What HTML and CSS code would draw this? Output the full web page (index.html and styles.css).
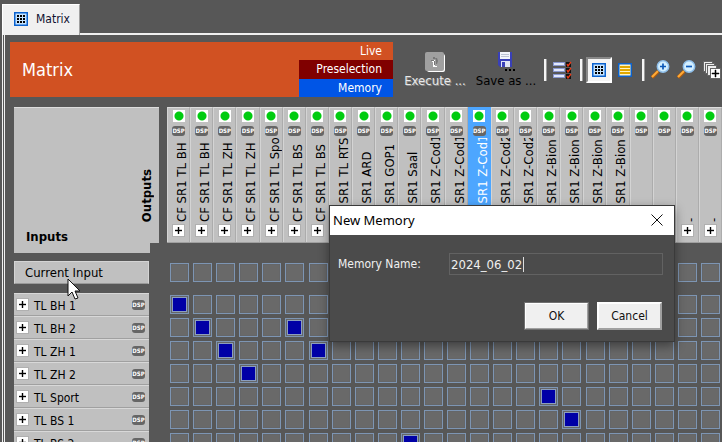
FILE: index.html
```html
<!DOCTYPE html>
<html lang="en">
<head>
  <meta charset="utf-8">
  <title>Matrix</title>
  <link rel="stylesheet" href="styles.css">
</head>
<body>
  <nav class="tabs">
    <a class="tab" href="#matrix">
      <svg class="tab-icon" width="14" height="14" viewBox="0 0 14 14">
        <rect x="0.75" y="0.75" width="12.5" height="12.5" fill="#c4e3ff" stroke="#0b62cf" stroke-width="1.5"/>
        <path d="M3 3h2v2H3zM6 3h2v2H6zM9 3h2v2H9zM3 6h2v2H3zM6 6h2v2H6zM9 6h2v2H9zM3 9h2v2H3zM6 9h2v2H6zM9 9h2v2H9z" fill="#000"/>
      </svg>
      Matrix
    </a>
  </nav>

  <main class="pane" id="matrix">
    <header class="top">
      <div class="banner">
        <h1>Matrix</h1>
        <div class="modes">
          <span class="mode">Live</span>
          <span class="mode preselection">Preselection</span>
          <span class="mode memory">Memory</span>
        </div>
      </div>

      <div class="toolbar">
        <button class="tool execute" disabled>
          <svg width="20" height="20" viewBox="0 0 20 20">
            <rect x="2" y="2" width="18" height="18" rx="2" fill="#fff"/>
            <rect x="0" y="0" width="19" height="19" rx="2" fill="#a0a0a0"/>
            <path d="M7 8h3v6h2v1H8v-5H7z" fill="#fff"/>
            <path d="M8 5h2v2H8zM10 6h2l1 3-1 3h-1V8zM6 8h3v1H6zM9 9h1v4H9z" fill="#777"/>
          </svg>
          Execute ...
        </button>
        <button class="tool save">
          <svg width="18" height="20" viewBox="0 0 18 20">
            <path d="M1 0h14v15H3l-2-2z" fill="#3940b8"/>
            <path d="M3 0h10v7H3z" fill="#f1f4fa"/>
            <path d="M4 2h8v1H4zM4 4h8v1H4z" fill="#bcc3d3"/>
            <path d="M4 9h9v6H4z" fill="#dfe5f4"/>
            <path d="M5 10h3v5H5z" fill="#3940b8"/>
            <path d="M8 17h2v2H8zM12 17h2v2h-2zM16 17h2v2h-2z" fill="#000"/>
          </svg>
          Save as ...
        </button>
        <span class="separator"></span>
        <button class="icon-btn list-btn" aria-label="List">
          <svg width="19" height="18" viewBox="0 0 19 18">
            <path d="M0 1h12v4H0zM0 7h12v4H0zM0 13h12v4H0z" fill="#8997cf"/>
            <path d="M1 2h10v2H1zM1 8h10v2H1zM1 14h10v2H1z" fill="#e1e8fb"/>
            <path d="M13 1h5v5h-5zM13 7h5v5h-5zM13 13h5v5h-5z" fill="#111"/>
            <path d="M14 3l1 2 3-4M14 9l1 2 3-4M14 15l1 2 3-4" fill="none" stroke="#ee3a17" stroke-width="1.3"/>
          </svg>
        </button>
        <span class="separator"></span>
        <button class="icon-btn pressed" aria-label="Matrix view">
          <svg width="14" height="14" viewBox="0 0 14 14">
            <rect x="0.75" y="0.75" width="12.5" height="12.5" fill="#c4e3ff" stroke="#0b62cf" stroke-width="1.5"/>
            <path d="M3 3h2v2H3zM6 3h2v2H6zM9 3h2v2H9zM3 6h2v2H3zM6 6h2v2H6zM9 6h2v2H9zM3 9h2v2H3zM6 9h2v2H6zM9 9h2v2H9z" fill="#000"/>
          </svg>
        </button>
        <button class="icon-btn rows-btn" aria-label="Row view">
          <svg width="14" height="14" viewBox="0 0 14 14">
            <rect x="0.75" y="0.75" width="12.5" height="12.5" fill="#fff4c2" stroke="#0b62cf" stroke-width="1.5"/>
            <path d="M2 3h10v2H2zM2 6h10v2H2zM2 9h10v2H2z" fill="#e0a800"/>
          </svg>
        </button>
        <span class="separator"></span>
        <button class="icon-btn zoom-btn" aria-label="Zoom in">
          <svg width="19" height="19" viewBox="0 0 19 19">
            <path d="M1 17.5l6-6" stroke="#b35c0a" stroke-width="3.5"/>
            <path d="M1 17l6-6" stroke="#ffab38" stroke-width="2"/>
            <circle cx="12" cy="6.5" r="5.7" fill="#d3efff" stroke="#8fbfea" stroke-width="1.5"/>
            <path d="M12 3.5v6M9 6.5h6" stroke="#0c58b8" stroke-width="1.7"/>
          </svg>
        </button>
        <button class="icon-btn zoom-btn" aria-label="Zoom out">
          <svg width="19" height="19" viewBox="0 0 19 19">
            <path d="M1 17.5l6-6" stroke="#b35c0a" stroke-width="3.5"/>
            <path d="M1 17l6-6" stroke="#ffab38" stroke-width="2"/>
            <circle cx="12" cy="6.5" r="5.7" fill="#d3efff" stroke="#8fbfea" stroke-width="1.5"/>
            <path d="M9 6.5h6" stroke="#0c58b8" stroke-width="1.7"/>
          </svg>
        </button>
        <button class="icon-btn" aria-label="Expand all">
          <svg width="18" height="18" viewBox="0 0 18 18">
            <g fill="#eee" stroke="#666">
              <rect x="0.5" y="0.5" width="9" height="10"/>
              <rect x="2.5" y="2.5" width="9" height="10"/>
              <rect x="4.5" y="4.5" width="9" height="10"/>
              <rect x="7.5" y="7.5" width="10" height="10" fill="#fff"/>
            </g>
            <path d="M12 9h1v3h3v1h-3v3h-1v-3H9v-1h3z" fill="#000" stroke="#000" stroke-width="0.5"/>
          </svg>
        </button>
      </div>
    </header>

    <section class="outputs">
      <div class="corner">
        <span class="outputs-title">Outputs</span>
        <span class="inputs-title">Inputs</span>
      </div>
      <div class="columns" id="columns"></div>
    </section>

    <section class="current">
      <div class="current-label">
        Current Input
        <svg class="cursor" width="14" height="23" viewBox="0 0 14 23">
          <path d="M1 1v17l4-4 3 7 3-1-3-7h5z" fill="#fff" stroke="#111"/>
        </svg>
      </div>
      <div class="cells" id="currentCells"></div>
    </section>

    <section class="inputs">
      <ul class="input-list" id="inputList"></ul>
      <div class="cells" id="cells"></div>
    </section>
  </main>

  <form class="dialog" role="dialog" aria-labelledby="dialogTitle">
    <div class="dialog-title">
      <span id="dialogTitle">New Memory</span>
      <button type="button" class="close" aria-label="Close">
        <svg width="12" height="12" viewBox="0 0 12 12">
          <path d="M0.5 0.5l11 11M11.5 0.5l-11 11" stroke="#111" fill="none"/>
        </svg>
      </button>
    </div>
    <div class="field">
      <label for="memoryName">Memory Name:</label>
      <div class="text-box">
        <input id="memoryName" type="text" value="2024_06_02">
        <span class="caret"></span>
      </div>
    </div>
    <div class="actions">
      <button type="button" class="action ok">OK</button>
      <button type="button" class="action">Cancel</button>
    </div>
  </form>

  <script>
    const outputs = [
      'CF SR1 TL BH', 'CF SR1 TL BH', 'CF SR1 TL ZH', 'CF SR1 TL ZH',
      'CF SR1 TL Spo', 'CF SR1 TL BS', 'CF SR1 TL BS', 'CF SR1 TL RTS',
      'CF SR1 ARD', 'CF SR1 GOP1', 'CF SR1 Saal', 'CF SR1 Z-Cod1',
      'CF SR1 Z-Cod1', 'CF SR1 Z-Cod1', 'CF SR1 Z-Cod2', 'CF SR1 Z-Cod2',
      'CF SR1 Z-Bion', 'CF SR1 Z-Bion', 'CF SR1 Z-Bion', 'CF SR1 Z-Bion',
      '-', '-', '-', '-'
    ];
    const selectedOutput = 13;

    // connected outputs for each input
    const inputs = [
      { name: 'TL BH 1', on: [0] },
      { name: 'TL BH 2', on: [1, 5] },
      { name: 'TL ZH 1', on: [2, 6] },
      { name: 'TL ZH 2', on: [3] },
      { name: 'TL Sport', on: [16] },
      { name: 'TL BS 1', on: [17] },
      { name: 'TL BS 2', on: [10] }
    ];

    const plus = `<button class="plus" aria-label="Expand">
      <svg width="7" height="7" viewBox="0 0 7 7"><path d="M3 0h1v3h3v1H4v3H3V4H0V3h3z" stroke="#000" stroke-width="0.4"/></svg>
    </button>`;

    const dsp = '<span class="dsp">DSP</span>';

    function cell(on) {
      return `<span class="cell">${on ? '<span class="point"></span>' : ''}</span>`;
    }

    document.getElementById('columns').innerHTML = outputs.map((name, i) => `
      <div class="column ${i === selectedOutput ? 'selected' : ''}">
        <span class="led"></span>
        ${dsp}
        <span class="column-name">${name}</span>
        ${plus}
      </div>`).join('');

    document.getElementById('currentCells').innerHTML = outputs.map(() => cell(false)).join('');

    document.getElementById('inputList').innerHTML = inputs.map(input => `
      <li class="input-row">${plus}<span class="input-name">${input.name}</span>${dsp}</li>`).join('');

    document.getElementById('cells').innerHTML = inputs.map(input =>
      outputs.map((name, i) => cell(input.on.includes(i))).join('')
    ).join('');
  </script>
</body>
</html>
```
FILE: styles.css
```css
* {
  box-sizing: border-box;
}

body {
  margin: 0;
  padding: 4px 0 0 2px;
  height: 100vh;
  overflow: hidden;
  background: #575757;
  color: #000;
  font-family: "DejaVu Sans Condensed", "DejaVu Sans", sans-serif;
  font-size: 12px;
}

button {
  font: inherit;
  color: inherit;
  padding: 0;
  border: none;
  background: none;
}

svg {
  display: block;
}

/* tabs */
.tabs {
  display: flex;
}

.tab {
  display: flex;
  align-items: center;
  gap: 8px;
  height: 31px;
  margin-bottom: -2px;
  padding: 0 9px 2px 11px;
  background: #f0f0f0;
  border-top: 1px solid #fff;
  border-left: 1px solid #fff;
  border-right: 1px solid #a0a0a0;
  color: #101030;
  text-decoration: none;
  z-index: 1;
}

.pane {
  border-top: 2px solid #f0f0f0;
  border-left: 3px double #f0f0f0;
}

/* banner and toolbar */
.top {
  display: flex;
  padding: 7px 0 10px 5px;
}

.banner {
  flex: 1;
  display: flex;
  justify-content: space-between;
  height: 55px;
  background: #d15122;
  color: #fff;
}

.banner h1 {
  margin: 0;
  padding-left: 12px;
  font-size: 18px;
  font-weight: normal;
  line-height: 55px;
}

.modes {
  display: grid;
  grid-template-rows: repeat(3, 1fr);
  width: 94px;
}

.mode {
  display: flex;
  align-items: center;
  justify-content: flex-end;
  padding-right: 11px;
}

.preselection {
  background: #800000;
}

.memory {
  background: #0055e6;
}

.toolbar {
  display: flex;
  align-items: center;
  width: 329px;
  overflow: hidden;
}

.tool {
  display: flex;
  flex-direction: column;
  align-items: center;
  justify-content: space-between;
  flex: none;
  height: 36px;
  white-space: nowrap;
  font-size: 13px;
}

.execute {
  width: 64px;
  margin-left: 10px;
  color: #e8e8e8;
  text-shadow: 1px 1px 0 #8a8a8a;
}

.save {
  width: 64px;
  margin-left: 7px;
}

.separator {
  flex: none;
  width: 3px;
  height: 22px;
  margin: 0 6px;
  border-left: 2px solid #f4f4f4;
  border-right: 1px solid #999;
}

.icon-btn {
  flex: none;
}

.list-btn {
  width: 21px;
}

.pressed {
  padding: 4px;
  margin-left: -3px;
  border: 2px solid #888;
  border-right-color: #fff;
  border-bottom-color: #fff;
  background: #f4f4f4;
}

.rows-btn {
  margin: 0 4px 0 6px;
}

.zoom-btn {
  margin-right: 7px;
}

/* output headers */
.outputs {
  display: grid;
  grid-template-columns: 145px 1fr;
  gap: 8px;
  padding-left: 9px;
}

.corner {
  display: flex;
  flex-direction: column;
  justify-content: space-between;
  height: 146px;
  padding: 61px 5px 9px 12px;
  background: #c0c0c0;
  border-top: 1px solid #ddd;
  clip-path: polygon(0 0, 100% 0, 100% 136px, 136px 136px, 136px 100%, 0 100%);
  font-size: 13px;
  font-weight: bold;
}

.outputs-title {
  align-self: flex-end;
  writing-mode: vertical-rl;
  transform: rotate(180deg);
}

.columns {
  display: grid;
  grid-template-columns: repeat(24, 1fr);
  height: 136px;
  border-bottom: 1px solid #a0a0a0;
}

.column {
  display: flex;
  flex-direction: column;
  align-items: center;
  min-width: 0;
  padding-top: 2px;
  background: #c0c0c0;
  border-top: 1px solid #ddd;
  border-left: 1px solid #d4d4d4;
  border-right: 1px solid #acacac;
}

.column.selected {
  background: #4da6ff;
  border-color: #4da6ff;
  color: #fff;
}

.led {
  width: 12px;
  height: 12px;
  background: radial-gradient(circle, #00cc10 4px, #fff 5px);
}

.dsp {
  width: 13px;
  height: 10px;
  margin-top: 4px;
  border-radius: 3px;
  background: #666;
  color: #fff;
  font-size: 6px;
  font-weight: bold;
  line-height: 10px;
  text-align: center;
}

.column-name {
  height: 84px;
  margin: 2px 0 3px 7px;
  overflow: hidden;
  writing-mode: vertical-rl;
  transform: rotate(180deg);
  font-size: 13px;
  line-height: 16px;
  white-space: nowrap;
}

.plus {
  display: flex;
  align-items: center;
  justify-content: center;
  flex: none;
  width: 11px;
  height: 11px;
  background: #fff;
  outline: 1px solid #b0b0b0;
}

/* current input */
.current,
.inputs {
  display: grid;
  grid-template-columns: 135px 1fr;
  gap: 18px;
  padding-left: 9px;
}

.current {
  padding-top: 8px;
  padding-bottom: 9px;
}

.current-label {
  position: relative;
  padding-left: 10px;
  background: #c0c0c0;
  border: 1px solid #d4d4d4;
  border-bottom-color: #999;
  font-size: 13px;
  line-height: 21px;
}

.cursor {
  position: absolute;
  left: 52px;
  top: 16px;
}

.cells {
  display: grid;
  grid-template-columns: repeat(24, 1fr);
  grid-auto-rows: 23px;
  align-items: center;
  justify-items: center;
  padding-left: 1px;
}

.cell {
  display: grid;
  place-items: center;
  width: 19px;
  height: 19px;
  background: #696969;
  border: 1px solid #7d95b3;
  box-shadow: inset 0 0 1px #465468;
}

.point {
  width: 15px;
  height: 15px;
  background: #0000a6;
  border: 1px solid #8b9ebd;
}

/* inputs */
.input-list {
  margin: 0;
  padding: 0;
  list-style: none;
}

.input-row {
  display: flex;
  align-items: center;
  height: 23px;
  padding: 0 4px 0 3px;
  background: #c0c0c0;
  border-top: 1px solid #d8d8d8;
  border-bottom: 1px solid #a0a0a0;
}

.input-name {
  flex: 1;
  padding: 3px 0 0 6px;
}

.input-row .dsp {
  margin-top: 0;
}

/* dialog */
.dialog {
  position: absolute;
  left: 329px;
  top: 205px;
  width: 346px;
  padding-bottom: 11px;
  background: #4b4b4b;
  border: 1px solid #3a3a3a;
  box-shadow: 0 4px 10px rgba(0, 0, 0, 0.4);
  color: #f0f0f0;
}

.dialog-title {
  display: flex;
  align-items: center;
  justify-content: space-between;
  height: 29px;
  padding: 0 11px 2px 3px;
  background: #fff;
  color: #000;
  font-family: "Noto Sans", "Open Sans", sans-serif;
  font-size: 13px;
}

.field {
  display: flex;
  align-items: center;
  justify-content: space-between;
  padding: 18px 11px 0 8px;
}

.text-box {
  display: flex;
  align-items: center;
  width: 214px;
  height: 22px;
  padding-left: 1px;
  border: 1px solid #626262;
}

.text-box input {
  width: 72px;
  padding: 0;
  border: none;
  outline: none;
  background: none;
  color: #f0f0f0;
  font: inherit;
  font-size: 13px;
}

.caret {
  width: 1px;
  height: 15px;
  background: #ddd;
}

.actions {
  display: flex;
  justify-content: flex-end;
  gap: 8px;
  padding: 27px 12px 0 0;
}

.action {
  width: 65px;
  height: 28px;
  background: #f0f0f0;
  border: 2px solid #fff;
  border-right-color: #a0a0a0;
  border-bottom-color: #a0a0a0;
  color: #101010;
}

.ok {
  outline: 1px solid #707070;
  outline-offset: -1px;
}
```
